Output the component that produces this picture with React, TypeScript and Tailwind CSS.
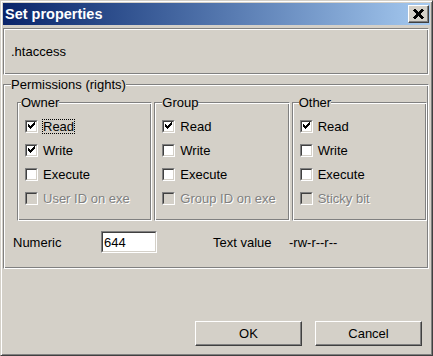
import React from "react";

// classic 7x7 tick, one 3px-high column per x
const tick = [3, 4, 5, 4, 3, 2, 1];

function CheckBox({ checked, disabled }: { checked?: boolean; disabled?: boolean }) {
  return (
    <span className="block w-[13px] h-[13px] shrink-0 border border-t-[#808080] border-l-[#808080] border-b-white border-r-white">
      <span
        className={`block w-full h-full border border-t-[#404040] border-l-[#404040] border-b-[#d4d0c8] border-r-[#d4d0c8] ${
          disabled ? "bg-[#d4d0c8]" : "bg-white"
        }`}
      >
        {checked && (
          <svg width="9" height="9" viewBox="0 0 9 9" shapeRendering="crispEdges" className="block">
            {tick.map((y, i) => (
              <rect key={i} x={i + 1} y={y - 1} width="1" height="3" fill="#000" />
            ))}
          </svg>
        )}
      </span>
    </span>
  );
}

type Item = { label: string; checked?: boolean; disabled?: boolean; focus?: boolean };

function Row({ item }: { item: Item }) {
  return (
    <div className="flex h-[24px] items-center gap-[4px]">
      <CheckBox checked={item.checked} disabled={item.disabled} />
      <span
        className={`border leading-[13px] whitespace-nowrap ${
          item.focus ? "border-dotted border-black" : "border-transparent"
        } ${item.disabled ? "text-[#808080] [text-shadow:1px_1px_0_#fff]" : ""}`}
      >
        {item.label}
      </span>
    </div>
  );
}

const etched =
  "border border-t-[#808080] border-l-[#808080] border-b-white border-r-white shadow-[inset_1px_1px_0_#fff,inset_-1px_-1px_0_#808080]";

function Group({ title, items, legendOffset }: { title: string; items: Item[]; legendOffset: string }) {
  return (
    <fieldset className={`flex-1 h-[126px] min-w-0 ${etched}`}>
      <legend className={`bg-[#d4d0c8] leading-[15px] ${legendOffset}`}>{title}</legend>
      <div className="flex flex-col pt-[4px] pl-[7px]">
        {items.map((it) => (
          <Row key={it.label} item={it} />
        ))}
      </div>
    </fieldset>
  );
}

const raised =
  "border border-t-white border-l-white border-r-[#404040] border-b-[#404040] shadow-[inset_-1px_-1px_0_#808080] bg-[#d4d0c8]";

export default function App() {
  return (
    <div className="w-[433px] h-[356px] flex flex-col bg-[#d4d0c8] border border-t-[#d4d0c8] border-l-[#d4d0c8] border-r-[#404040] border-b-[#404040] shadow-[inset_1px_1px_0_#fff,inset_-1px_-1px_0_#808080] p-[2px] font-['Liberation_Sans',Arial,sans-serif] text-[13px] leading-[15px] text-black">
      {/* title bar */}
      <div className="flex h-[22px] shrink-0 items-center justify-between bg-linear-to-r from-[#0a246a] to-[#a6caf0] pl-[2px] pr-[1px]">
        <span className="text-[14.5px] font-bold text-white">Set properties</span>
        <button className={`flex w-[21px] h-[18px] items-center justify-center ${raised}`}>
          <svg width="11" height="10" viewBox="0 0 11 10" shapeRendering="crispEdges">
            <path d="M1 0.5 L10 9.5 M10 0.5 L1 9.5" stroke="#000" strokeWidth="2.6" />
          </svg>
        </button>
      </div>

      {/* file name */}
      <div className={`mt-[3px] mr-[1px] flex h-[47px] shrink-0 items-center pl-[7px] ${etched}`}>.htaccess</div>

      {/* permissions */}
      <fieldset className={`mt-[2px] mr-[1px] pb-[15px] ${etched}`}>
        <legend className="ml-[7px] bg-[#d4d0c8] leading-[15px]">Permissions (rights)</legend>
        <div className="mt-[3px] flex gap-[2px] pl-[13px] pr-[1px]">
          <Group
            title="Owner"
            legendOffset="ml-[3px]"
            items={[
              { label: "Read", checked: true, focus: true },
              { label: "Write", checked: true },
              { label: "Execute" },
              { label: "User ID on exe", disabled: true },
            ]}
          />
          <Group
            title="Group"
            legendOffset="ml-[7px]"
            items={[
              { label: "Read", checked: true },
              { label: "Write" },
              { label: "Execute" },
              { label: "Group ID on exe", disabled: true },
            ]}
          />
          <Group
            title="Other"
            legendOffset="ml-[6px]"
            items={[
              { label: "Read", checked: true },
              { label: "Write" },
              { label: "Execute" },
              { label: "Sticky bit", disabled: true },
            ]}
          />
        </div>
        <div className="mt-[10px] flex items-center pl-[9px]">
          <span className="w-[88px]">Numeric</span>
          <span className="block w-[56px] h-[22px] border border-t-[#808080] border-l-[#808080] border-b-white border-r-white">
            <input
              readOnly
              value="644"
              className="block w-full h-full border border-t-[#404040] border-l-[#404040] border-b-[#d4d0c8] border-r-[#d4d0c8] bg-white px-[1px] text-[13px] outline-none"
            />
          </span>
          <span className="ml-[56px] w-[76px]">Text value</span>
          <span>-rw-r--r--</span>
        </div>
      </fieldset>

      {/* buttons */}
      <div className="mt-[52px] flex justify-end gap-[13px] pr-[8px]">
        <button className={`w-[107px] h-[25px] ${raised}`}>OK</button>
        <button className={`w-[107px] h-[25px] ${raised}`}>Cancel</button>
      </div>
    </div>
  );
}
